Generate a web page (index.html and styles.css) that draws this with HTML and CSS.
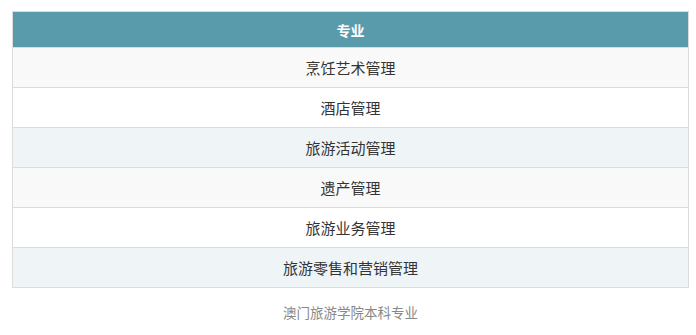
FILE: index.html
```html
<!DOCTYPE html>
<html lang="zh">
<head>
<meta charset="utf-8">
<link rel="stylesheet" href="styles.css">
</head>
<body>
<figure class="figure">
  <div class="table">
    <div class="row head">专业</div>
    <div class="row gray">烹饪艺术管理</div>
    <div class="row white">酒店管理</div>
    <div class="row blue">旅游活动管理</div>
    <div class="row gray">遗产管理</div>
    <div class="row white">旅游业务管理</div>
    <div class="row blue">旅游零售和营销管理</div>
  </div>
  <figcaption class="caption">澳门旅游学院本科专业</figcaption>
</figure>
</body>
</html>
```

FILE: styles.css
```css
html, body {
  margin: 0;
  padding: 0;
  background: #fff;
}
body {
  font-family: "Noto Sans CJK SC", "Noto Sans", sans-serif;
}
.figure {
  margin: 11px 0 0 12px;
  width: 677px;
}
.table {
  box-sizing: border-box;
  width: 677px;
  border: 1px solid #dcdcdc;
  display: flex;
  flex-direction: column;
}
.row {
  height: 39px;
  display: flex;
  align-items: center;
  justify-content: center;
  font-size: 15px;
  color: #333;
  border-bottom: 1px solid #dcdcdc;
}
.row:last-child {
  border-bottom: none;
}
.head {
  height: 35px;
  background: #5a9bab;
  color: #fff;
  font-weight: bold;
  font-size: 14px;
}
.gray { background: #f9f9f9; }
.white { background: #fff; }
.blue { background: #eff4f7; }
.caption {
  margin-top: 14px;
  text-align: center;
  font-size: 13.5px;
  line-height: 20px;
  color: #888;
}
```
